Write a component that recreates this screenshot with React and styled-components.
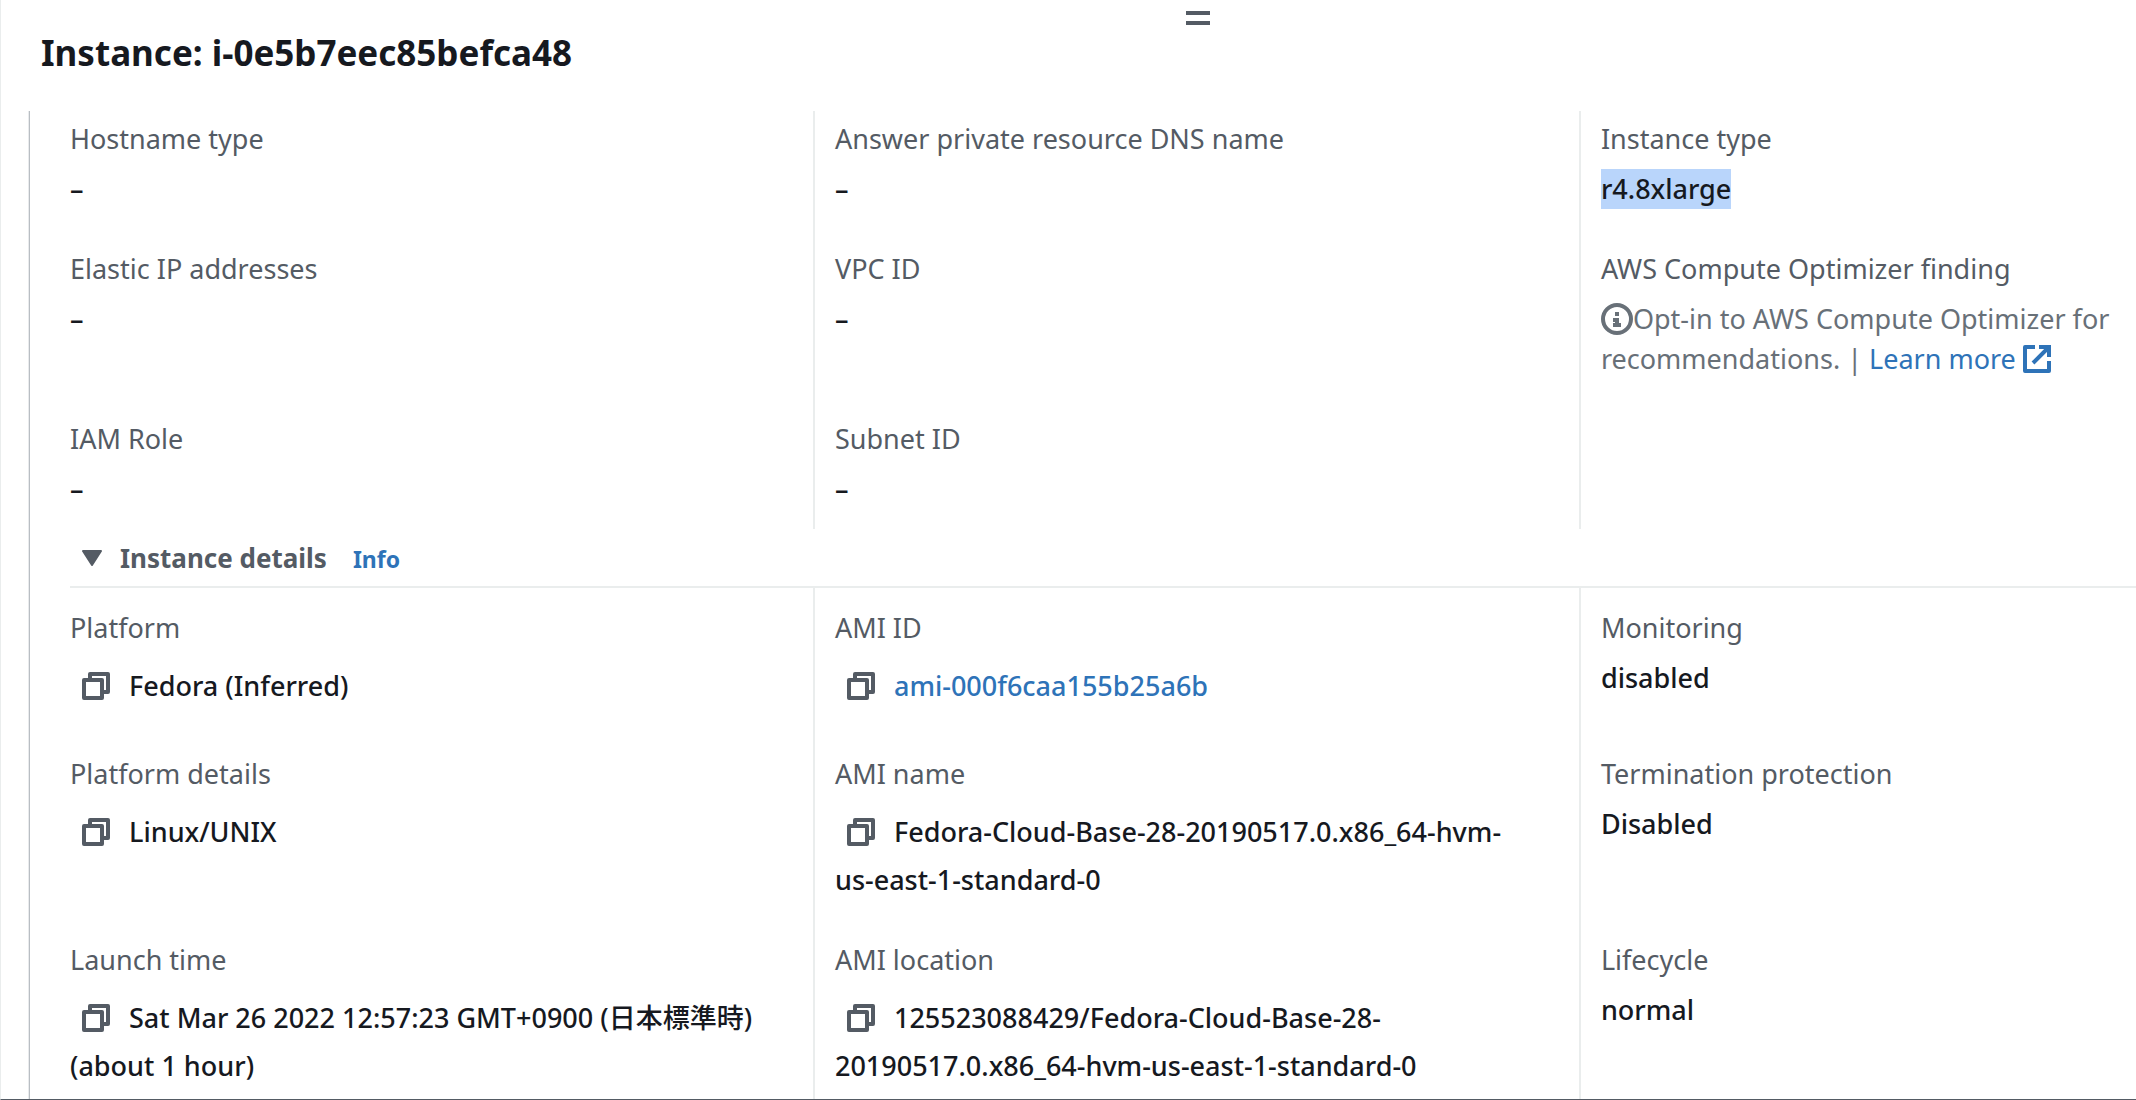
import React from 'react';
import styled, { createGlobalStyle } from 'styled-components';

const GlobalStyle = createGlobalStyle`
  * { box-sizing: border-box; }
  body {
    margin: 0;
    background: #fff;
    color: #16191f;
    font: 500 27px/40px "Noto Sans", "Noto Sans CJK JP", sans-serif;
  }
`;

const Panel = styled.main`
  display: flex;
  flex-direction: column;
  min-height: 100vh;
  overflow-x: hidden;
  border-left: 1px solid #eaeded;
  border-bottom: 1px solid #545b64;
`;

const HandleBar = styled.div`
  display: flex;
  justify-content: center;
  padding: 11px 0 0 258px;
`;

const Handle = styled.button`
  width: 24px;
  height: 14px;
  padding: 0;
  border: solid #545b64;
  border-width: 4px 0;
  background: none;
  cursor: row-resize;
`;

const Title = styled.h1`
  margin: 4px 0 34px 40px;
  font-size: 35px;
  font-weight: 670;
  line-height: 48px;
`;

const Content = styled.div`
  display: flex;
  flex-direction: column;
  flex: 1;
  margin-left: 28px;
  padding-left: 17px;
  border-left: 1px solid #b9bec3;
  box-shadow: -1px 0 0 #e9ebed;
`;

const Fields = styled.dl`
  display: grid;
  grid-template-columns: 11fr 11fr 8fr;
  grid-template-rows: auto auto 1fr;
  flex: ${(p) => (p.$grow ? 1 : 'none')};
  margin: 0;

  > :nth-child(-n + 3) { padding-top: ${(p) => p.$top}px; }
  > :nth-child(n + 7) { padding-bottom: ${(p) => (p.$grow ? 8 : 20)}px; }
  > :nth-child(3n) { padding-right: 8px; }
  > :nth-child(3n + 1) { border-left-width: 0; padding-left: 23px; }
`;

const Cell = styled.div`
  min-width: 0;
  padding: 0 24px 40px 20px;
  border-left: 2px solid #eaeded;
`;

const Label = styled.dt`
  margin-bottom: 10px;
  color: #545b64;
  font-weight: 450;
`;

const Value = styled.dd`
  margin: 0;
  color: ${(p) => (p.$muted ? '#687078' : '#16191f')};
  font-weight: ${(p) => (p.$muted ? 450 : 500)};
`;

const Selected = styled.mark`
  display: inline-block;
  background: #b9d5fb;
  color: inherit;
`;

const Unbroken = styled.span`
  white-space: nowrap;
`;

const Link = styled.a`
  color: #2e73b8;
  text-decoration: none;
`;

const InfoLink = styled(Link)`
  margin-left: 26px;
  font-size: 23px;
  font-weight: 700;
  line-height: 32px;
`;

const CopyButton = styled.button`
  display: inline-flex;
  align-items: center;
  height: 56px;
  margin-right: 7px;
  padding: 0 10px;
  border: 0;
  background: none;
  color: #545b64;
  vertical-align: -6px;
  cursor: pointer;
`;

const InlineIcon = styled.svg`
  display: inline-block;
  vertical-align: ${(p) => p.$drop}px;
`;

const SectionHeader = styled.header`
  display: flex;
  align-items: baseline;
  margin-left: 23px;
  padding: 9px 0 8px 12px;
  border-bottom: 2px solid #eaeded;
  color: #545b64;
`;

const SectionTitle = styled.h2`
  margin: 0;
  font-size: 26px;
  line-height: 40px;
`;

const Toggle = styled.button`
  display: inline-flex;
  align-items: baseline;
  gap: 18px;
  padding: 0;
  border: 0;
  background: none;
  color: inherit;
  font: inherit;
  cursor: pointer;
`;

const CopyIcon = () => (
  <svg width="32" height="32" viewBox="0 0 32 32" fill="none" stroke="currentColor" strokeWidth="4" strokeLinejoin="round" aria-hidden="true">
    <path d="M4 10h18v18H4z" />
    <path d="M10 8V4h18v18h-4" />
  </svg>
);

const InfoIcon = () => (
  <InlineIcon $drop={-6} width="32" height="32" viewBox="0 0 32 32" aria-hidden="true">
    <circle cx="16" cy="16" r="14" fill="none" stroke="currentColor" strokeWidth="4" />
    <path fill="currentColor" d="M14 9h4v4h-4zM12 15h6v5h2v4h-8v-4h2v-1h-2z" />
  </InlineIcon>
);

const ExternalIcon = () => (
  <InlineIcon $drop={-4} width="28" height="28" viewBox="0 0 28 28" fill="none" stroke="currentColor" strokeWidth="4" aria-hidden="true">
    <path d="M12 2H2v24h24V16" strokeLinejoin="round" />
    <path d="M16 2h10v10M26 2 10 18" />
  </InlineIcon>
);

const CaretIcon = () => (
  <svg width="20" height="18" viewBox="0 0 20 18" fill="currentColor" stroke="currentColor" strokeWidth="2" strokeLinejoin="round" aria-hidden="true">
    <path d="M1 1h18l-9 14z" />
  </svg>
);

const Field = ({ label, muted, children }) => (
  <Cell>
    <Label>{label}</Label>
    <Value $muted={muted}>{children}</Value>
  </Cell>
);

const Copyable = ({ name, children }) => (
  <>
    <CopyButton type="button" aria-label={`Copy ${name}`}>
      <CopyIcon />
    </CopyButton>
    {children}
  </>
);

export default function App() {
  return (
    <Panel>
      <GlobalStyle />
      <HandleBar>
        <Handle type="button" aria-label="Resize panel" />
      </HandleBar>
      <Title>Instance: i-0e5b7eec85befca48</Title>
      <Content>
        <Fields $top={8}>
          <Field label="Hostname type">–</Field>
          <Field label="Answer private resource DNS name">–</Field>
          <Field label="Instance type"><Selected>r4.8xlarge</Selected></Field>
          <Field label="Elastic IP addresses">–</Field>
          <Field label="VPC ID">–</Field>
          <Field label="AWS Compute Optimizer finding" muted>
            <InfoIcon />Opt-in to AWS Compute Optimizer for recommendations. |{' '}
            <Link href="#learn-more">Learn more <ExternalIcon /></Link>
          </Field>
          <Field label="IAM Role">–</Field>
          <Field label="Subnet ID">–</Field>
          <Cell />
        </Fields>
        <SectionHeader>
          <SectionTitle>
            <Toggle type="button" aria-expanded="true">
              <CaretIcon />
              Instance details
            </Toggle>
          </SectionTitle>
          <InfoLink href="#info">Info</InfoLink>
        </SectionHeader>
        <Fields $top={20} $grow>
          <Field label="Platform"><Copyable name="platform">Fedora (Inferred)</Copyable></Field>
          <Field label="AMI ID">
            <Copyable name="AMI ID"><Link href="#ami">ami-000f6caa155b25a6b</Link></Copyable>
          </Field>
          <Field label="Monitoring">disabled</Field>
          <Field label="Platform details"><Copyable name="platform details">Linux/UNIX</Copyable></Field>
          <Field label="AMI name">
            <Copyable name="AMI name">Fedora-Cloud-Base-28-20190517.0.x86_64-hvm-<wbr /><Unbroken>us-east-1-standard-0</Unbroken></Copyable>
          </Field>
          <Field label="Termination protection">Disabled</Field>
          <Field label="Launch time">
            <Copyable name="launch time">Sat Mar 26 2022 12:57:23 GMT+0900 (日本標準時) (about 1 hour)</Copyable>
          </Field>
          <Field label="AMI location">
            <Copyable name="AMI location">125523088429/Fedora-Cloud-Base-28-<wbr /><Unbroken>20190517.0.x86_64-hvm-us-east-1-standard-0</Unbroken></Copyable>
          </Field>
          <Field label="Lifecycle">normal</Field>
        </Fields>
      </Content>
    </Panel>
  );
}
